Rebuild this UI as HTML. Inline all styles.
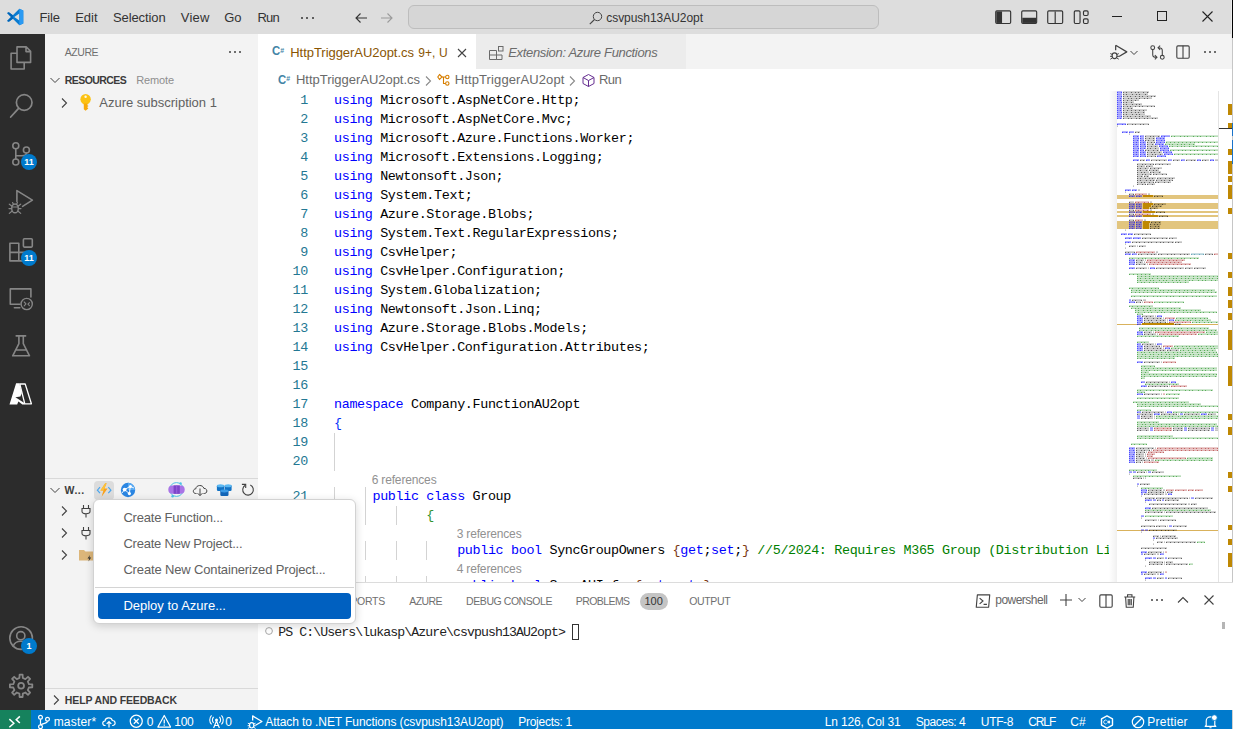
<!DOCTYPE html><html lang="en"><head><meta charset="utf-8"><title>HttpTriggerAU2opt.cs - csvpush13AU2opt - Visual Studio Code</title><style>
html,body{margin:0;padding:0}
body{width:1233px;height:729px;overflow:hidden;position:relative;background:#fff;font-family:"Liberation Sans",sans-serif;font-size:13px}
.a{position:absolute;display:block}
.t{position:absolute;white-space:pre;display:block}
.code{position:absolute;white-space:pre;font-family:"Liberation Mono",monospace;font-size:13.4px;letter-spacing:-0.341px;line-height:19px;color:#000;height:19px}
.code b{font-weight:400;color:#0000ff}
.code i{font-style:normal;color:#008000}
.ln{position:absolute;width:50px;text-align:right;font-family:"Liberation Mono",monospace;font-size:13.4px;letter-spacing:-0.341px;line-height:19px;color:#237893}
</style></head><body><div class="a" style="left:0px;top:0px;width:1233px;height:34px;background:#dddddd;"></div>
<div class="a" style="left:0px;top:34px;width:45px;height:676px;background:#2c2c2c;"></div>
<div class="a" style="left:45px;top:34px;width:213px;height:676px;background:#f3f3f3;"></div>
<div class="a" style="left:258px;top:34px;width:975px;height:35px;background:#f3f3f3;"></div>
<div class="a" style="left:258px;top:34px;width:218px;height:35px;background:#ffffff;"></div>
<div class="a" style="left:476px;top:34px;width:210px;height:35px;background:#ececec;"></div>
<div class="a" style="left:0px;top:710px;width:1233px;height:19px;background:#007acc;"></div>
<div class="a" style="left:0px;top:710px;width:31px;height:19px;background:#16825d;"></div>
<div class="a" style="left:1232px;top:34px;width:1px;height:676px;background:#c6c6c6;"></div>
<div class="a" style="left:1231px;top:0px;width:1px;height:38px;background:#ececec;"></div>
<div class="a" style="left:1232px;top:0px;width:1px;height:38px;background:#000;"></div>
<svg class="a" style="left:6px;top:8.3px;" width="18" height="18" viewBox="0 0 100 100"><path d="M74 4 L38 40 L16 23 L6 28 L28 50 L6 72 L16 77 L38 60 L74 96 L96 86 V14 Z M74 30 V70 L46 50 Z" fill="#0a7bd0" fill-rule="evenodd"/><path d="M74 4 L96 14 V86 L74 96 Z" fill="#2b9af3"/><path d="M16 23 L6 28 L28 50 L6 72 L16 77 L38 60 L38 40 Z" fill="#0065b8"/></svg>
<span class="t" style="left:39.48px;top:7.90px;font-size:13px;color:#333333;line-height:20px;letter-spacing:-0.141px;">File</span>
<span class="t" style="left:75.19px;top:7.90px;font-size:13px;color:#333333;line-height:20px;letter-spacing:-0.025px;">Edit</span>
<span class="t" style="left:112.98px;top:7.90px;font-size:13px;color:#333333;line-height:20px;letter-spacing:-0.094px;">Selection</span>
<span class="t" style="left:180.78px;top:7.90px;font-size:13px;color:#333333;line-height:20px;letter-spacing:0.226px;">View</span>
<span class="t" style="left:224.28px;top:7.90px;font-size:13px;color:#333333;line-height:20px;letter-spacing:-0.014px;">Go</span>
<span class="t" style="left:257.49px;top:7.90px;font-size:13px;color:#333333;line-height:20px;letter-spacing:-0.765px;">Run</span>
<div class="a" style="left:300.5px;top:17px;width:2px;height:2px;background:#333333;border-radius:1px"></div>
<div class="a" style="left:306px;top:17px;width:2px;height:2px;background:#333333;border-radius:1px"></div>
<div class="a" style="left:311.5px;top:17px;width:2px;height:2px;background:#333333;border-radius:1px"></div>
<svg class="a" style="left:353px;top:10px;" width="16" height="16" viewBox="0 0 16 16"><path d="M14 8H3 M7.5 3.5 L3 8 L7.5 12.5" fill="none" stroke="#333" stroke-width="1.1"/></svg>
<svg class="a" style="left:379px;top:10px;" width="16" height="16" viewBox="0 0 16 16"><path d="M2 8H13 M8.5 3.5 L13 8 L8.5 12.5" fill="none" stroke="#9a9a9a" stroke-width="1.1"/></svg>
<div class="a" style="left:408px;top:5px;width:469px;height:22px;background:#d6d6d6;border:1px solid #bdbdbd;border-radius:6px"></div>
<svg class="a" style="left:587.5px;top:9.5px;" width="16" height="16" viewBox="0 0 16 16"><circle cx="9.5" cy="6.5" r="4.2" fill="none" stroke="#444" stroke-width="1"/><path d="M6.5 9.5 L1.8 14.2" stroke="#444" stroke-width="1.1"/></svg>
<span class="t" style="left:606.24px;top:7.80px;font-size:12px;color:#333;line-height:20px;letter-spacing:-0.042px;">csvpush13AU2opt</span>
<svg class="a" style="left:993.8px;top:7.8px;" width="18.4" height="18.4" viewBox="0 0 16 16"><rect x="1.5" y="2.5" width="13" height="11" rx="1" fill="none" stroke="#333"/><rect x="2" y="3" width="5" height="10" fill="#333"/></svg>
<svg class="a" style="left:1019.8px;top:7.8px;" width="18.4" height="18.4" viewBox="0 0 16 16"><rect x="1.5" y="2.5" width="13" height="11" rx="1" fill="none" stroke="#333"/><rect x="2" y="8.5" width="12" height="4.5" fill="#333"/></svg>
<svg class="a" style="left:1045.8px;top:7.8px;" width="18.4" height="18.4" viewBox="0 0 16 16"><rect x="1.5" y="2.5" width="13" height="11" rx="1" fill="none" stroke="#333"/><path d="M8 3V13" stroke="#333"/></svg>
<svg class="a" style="left:1071.8px;top:7.8px;" width="18.4" height="18.4" viewBox="0 0 16 16"><rect x="2" y="2.5" width="5" height="11" rx="1" fill="none" stroke="#333"/><rect x="10" y="2.5" width="4" height="4" rx="1" fill="none" stroke="#333"/><rect x="10" y="9.5" width="4" height="4" rx="1" fill="none" stroke="#333"/></svg>
<div class="a" style="left:1112px;top:16px;width:10px;height:1px;background:#222;"></div>
<div class="a" style="left:1157px;top:11px;width:10px;height:10px;background:transparent;border:1px solid #222;box-sizing:border-box"></div>
<svg class="a" style="left:1202px;top:11px;" width="11" height="11" viewBox="0 0 11 11"><path d="M0.5 0.5 L10.5 10.5 M10.5 0.5 L0.5 10.5" stroke="#222" stroke-width="1.1" fill="none"/></svg>
<svg class="a" style="left:0;top:34px" width="45" height="676" viewBox="0 34 45 676">
<g fill="none" stroke="#868686" stroke-width="1.6" stroke-linejoin="round" stroke-linecap="round">
<path d="M17 46.9 H26.2 L30.6 51.3 V62.4 H17 Z M26 47.2 V51.6 H30.3"/>
<path d="M16.6 53.2 H11.1 V69 H24.2 V63"/>
<circle cx="24.2" cy="102.5" r="7.8" stroke-width="1.7"/><path d="M18.6 108.3 L10.7 117" stroke-width="1.8"/>
<circle cx="15.8" cy="145.8" r="3"/><circle cx="15.8" cy="162" r="3"/><circle cx="26.4" cy="150" r="3"/>
<path d="M15.8 148.8 V159 M26.4 153 C26.4 155.7 24 155.7 22 155.7 H15.8"/>
<path d="M16.9 201.5 V190.6 L32.4 200.1 L22.6 206.4"/>
<ellipse cx="15" cy="208.4" rx="3.3" ry="4.4" stroke-width="1.4"/>
<path d="M9.3 204.2 L11.8 206 M9 208.6 H11.6 M9.3 213.4 L11.9 211.2 M20.7 204.2 L18.2 206 M21 208.6 H18.4 M20.7 213.4 L18.1 211.2 M12.6 202.6 L13.5 204.2 M17.4 202.6 L16.5 204.2 M12 207 H18" stroke-width="1.2"/>
<path d="M9.9 243.3 H18.8 V260.9 H9.9 Z M9.9 252.4 H27.5 V260.9 H18.8"/>
<rect x="23.4" y="238.7" width="8.9" height="8.4" rx="1"/>
<path d="M20 304.3 H10.3 V288.9 H30.9 V297 M14.4 307.7 H19.8"/>
<circle cx="26.7" cy="304" r="5.6" stroke-width="1.4"/>
<path d="M24.2 302 L26 303.9 L24.2 305.8 M29.4 302.6 L27.9 304.1 L29.4 305.6" stroke-width="1.1"/>
<path d="M16.2 335.9 H25.6 M18.9 336.2 V343.7 L12.7 355.8 H29.5 L23.3 343.7 V336.2 M15.6 350 H26.6"/>
<circle cx="21.1" cy="638.1" r="11.3"/><circle cx="20.8" cy="635.7" r="4.1"/>
<path d="M13.2 646.3 C14.5 642.6 17.5 641.3 20.8 641.3 S27.3 642.6 28.7 646.3"/>
<path d="M19.4 678.0 L19.6 674.6 L22.6 674.6 L22.8 678.0 L25.4 679.1 L28.0 676.8 L30.1 678.9 L27.8 681.5 L28.9 684.1 L32.3 684.3 L32.3 687.3 L28.9 687.5 L27.8 690.1 L30.1 692.7 L28.0 694.8 L25.4 692.5 L22.8 693.6 L22.6 697.0 L19.6 697.0 L19.4 693.6 L16.8 692.5 L14.2 694.8 L12.1 692.7 L14.4 690.1 L13.3 687.5 L9.9 687.3 L9.9 684.3 L13.3 684.1 L14.4 681.5 L12.1 678.9 L14.2 676.8 L16.8 679.1 Z" stroke-width="1.8"/><circle cx="21.1" cy="685.8" r="2.9" stroke-width="1.8"/>
</g>
<path d="M16.1 383.3 H19.3 L21.8 393 L20.4 396.6 L15.4 397.3 L18.8 400.3 L17.2 404.4 H9.5 Z" fill="#fff"/>
<path d="M15.4 397.3 L23.6 402.4 L24.8 404.4 H22.3 L18.2 401.3 Z" fill="#fff"/>
<path d="M19.8 384 H25.2 L31.4 403.8 H24.8 Z" fill="none" stroke="#fff" stroke-width="1.3" stroke-linejoin="round"/>
</svg>
<div class="a" style="left:21px;top:154px;width:16px;height:16px;background:#007acc;border-radius:8px"></div>
<span class="t" style="left:21.00px;top:152.00px;font-size:9px;color:#fff;line-height:20px;font-weight:700;width:16px;text-align:center;">11</span>
<div class="a" style="left:21px;top:250px;width:16px;height:16px;background:#007acc;border-radius:8px"></div>
<span class="t" style="left:21.00px;top:248.00px;font-size:9px;color:#fff;line-height:20px;font-weight:700;width:16px;text-align:center;">11</span>
<div class="a" style="left:21px;top:638px;width:16px;height:16px;background:#007acc;border-radius:8px"></div>
<span class="t" style="left:21.00px;top:636.00px;font-size:9px;color:#fff;line-height:20px;font-weight:700;width:16px;text-align:center;">1</span>
<span class="t" style="left:64.82px;top:42.00px;font-size:10.5px;color:#6f6f6f;line-height:20px;letter-spacing:-0.460px;">AZURE</span>
<div class="a" style="left:229px;top:51px;width:2px;height:2px;background:#424242;border-radius:1px"></div>
<div class="a" style="left:234px;top:51px;width:2px;height:2px;background:#424242;border-radius:1px"></div>
<div class="a" style="left:239px;top:51px;width:2px;height:2px;background:#424242;border-radius:1px"></div>
<svg class="a" style="left:46.8px;top:72px;" width="16" height="16" viewBox="0 0 16 16"><path d="M3.5 6 L8 10.5 L12.5 6" fill="none" stroke="#424242" stroke-width="1"/></svg>
<span class="t" style="left:64.82px;top:70.00px;font-size:10.5px;color:#3b3b3b;line-height:20px;font-weight:700;letter-spacing:-0.570px;">RESOURCES</span>
<span class="t" style="left:136.20px;top:70.00px;font-size:11px;color:#8e8e8e;line-height:20px;letter-spacing:-0.124px;">Remote</span>
<svg class="a" style="left:55.7px;top:94.5px;" width="16" height="16" viewBox="0 0 16 16"><path d="M6 3.5 L10.5 8 L6 12.5" fill="none" stroke="#424242" stroke-width="1.1"/></svg>
<svg class="a" style="left:78px;top:93px;" width="16" height="19" viewBox="0 0 16 19"><circle cx="7.6" cy="6.2" r="5.2" fill="#fcc212"/><path d="M5.8 10.5 H9.4 V12.2 L10.6 13 L9.4 13.8 V14.6 L10.4 15.4 L9.4 16.2 L7.6 17.8 L5.8 16.2 Z" fill="#f7a90a"/><circle cx="7.6" cy="3.8" r="1.2" fill="#fff8e0"/></svg>
<span class="t" style="left:99.28px;top:92.50px;font-size:13px;color:#616161;line-height:20px;letter-spacing:-0.008px;">Azure subscription 1</span>
<div class="a" style="left:45px;top:478px;width:213px;height:1px;background:#d9d9d9;"></div>
<svg class="a" style="left:47px;top:482px;" width="16" height="16" viewBox="0 0 16 16"><path d="M3.5 6 L8 10.5 L12.5 6" fill="none" stroke="#424242" stroke-width="1"/></svg>
<span class="t" style="left:64.62px;top:479.50px;font-size:10.5px;color:#3b3b3b;line-height:20px;font-weight:700;letter-spacing:0.487px;">W...</span>
<div class="a" style="left:94px;top:480.5px;width:20px;height:19px;background:#dcdcdc;border-radius:4px"></div>
<svg class="a" style="left:96px;top:482px;" width="16" height="16" viewBox="0 0 16 16"><path d="M4 5.2 L1.4 8.2 L4 11.2 M12.3 5.2 L14.9 8.2 L12.3 11.2" fill="none" stroke="#4aa6ee" stroke-width="1.2"/><path d="M9.2 1.2 L4.4 8.6 H7.4 L5.6 14.8 L11.6 6.6 H8.4 L10.6 1.2 Z" fill="#f9a11b"/><path d="M9.2 1.2 L4.4 8.6 H7.4 L8.4 6.6 L10.6 1.2 Z" fill="#fcc23b"/></svg>
<svg class="a" style="left:120px;top:482px;" width="16" height="16" viewBox="0 0 16 16"><circle cx="8" cy="8" r="7.2" fill="#2b86e2"/><path d="M8 0.8 A7.2 7.2 0 0 1 15.2 8 L8 8 Z" fill="#56a8f2"/><path d="M4.6 7.6 L10.2 4.4 L9.4 11.6 Z M4.6 7.6 L2 11 M10.2 4.4 L14 6" fill="none" stroke="#fff" stroke-width="0.9"/><circle cx="4.6" cy="7.6" r="1.9" fill="#fff"/><circle cx="10.4" cy="4.4" r="1.5" fill="#fff"/><circle cx="9.4" cy="11.6" r="1.6" fill="#fff"/></svg>
<svg class="a" style="left:167.7px;top:481.2px;" width="17" height="17" viewBox="0 0 17 17"><circle cx="8.5" cy="8.5" r="6.9" fill="none" stroke="#4dc3e6" stroke-width="1"/><circle cx="12.6" cy="2.4" r="1.2" fill="#4dc3e6"/><circle cx="4.6" cy="15.2" r="1.2" fill="#4dc3e6"/><rect x="0.3" y="4.4" width="16.4" height="8.4" rx="4" fill="#a974e6"/><rect x="5.6" y="4.4" width="6.2" height="8.4" fill="#7d45c9"/><rect x="8.2" y="4.4" width="1" height="8.4" fill="#9a62dc"/></svg>
<svg class="a" style="left:192px;top:482px;" width="16" height="16" viewBox="0 0 16 16"><path d="M4.5 11.5 H3.8 C0.5 11.5 0.5 7 3.8 6.8 C4.2 2.5 11 2.5 11.8 6.3 C15.8 6.3 15.8 11.5 12.3 11.5 H11.5" fill="none" stroke="#424242" stroke-width="1"/><path d="M8 6.5 V13.5 M5.6 11.2 L8 13.6 L10.4 11.2" fill="none" stroke="#424242" stroke-width="1"/></svg>
<svg class="a" style="left:216px;top:482px;" width="16" height="16" viewBox="0 0 16 16"><rect x="0.9" y="3" width="7.2" height="6" rx="1.2" fill="#1272c4"/><rect x="8.6" y="3" width="7" height="6" rx="1.2" fill="#1272c4"/><ellipse cx="4.5" cy="3.8" rx="3.6" ry="1.5" fill="#5bb8f2"/><ellipse cx="12.1" cy="3.8" rx="3.5" ry="1.5" fill="#5bb8f2"/><rect x="4.3" y="8.4" width="8.2" height="5.6" rx="1.2" fill="#1466b8"/><ellipse cx="8.4" cy="9" rx="4.1" ry="1.4" fill="#3c9be6"/></svg>
<svg class="a" style="left:240px;top:482px;" width="16" height="16" viewBox="0 0 16 16"><path d="M5.2 3.3 A5.3 5.3 0 1 0 10.3 3" fill="none" stroke="#424242" stroke-width="1.1"/><path d="M1.9 2.4 H5.7 V5.9" fill="none" stroke="#424242" stroke-width="1.1"/></svg>
<svg class="a" style="left:55.8px;top:503px;" width="16" height="16" viewBox="0 0 16 16"><path d="M6 3.5 L10.5 8 L6 12.5" fill="none" stroke="#424242" stroke-width="1.1"/></svg>
<svg class="a" style="left:55.8px;top:525px;" width="16" height="16" viewBox="0 0 16 16"><path d="M6 3.5 L10.5 8 L6 12.5" fill="none" stroke="#424242" stroke-width="1.1"/></svg>
<svg class="a" style="left:55.8px;top:547px;" width="16" height="16" viewBox="0 0 16 16"><path d="M6 3.5 L10.5 8 L6 12.5" fill="none" stroke="#424242" stroke-width="1.1"/></svg>
<svg class="a" style="left:78px;top:503px;" width="16" height="16" viewBox="0 0 16 16"><path d="M5.5 2 V5 M10.5 2 V5 M4 5.5 H12 V8.5 C12 11.5 4 11.5 4 8.5 Z M8 11 V14.5" fill="none" stroke="#424242" stroke-width="1.1"/></svg>
<svg class="a" style="left:78px;top:525px;" width="16" height="16" viewBox="0 0 16 16"><path d="M5.5 2 V5 M10.5 2 V5 M4 5.5 H12 V8.5 C12 11.5 4 11.5 4 8.5 Z M8 11 V14.5" fill="none" stroke="#424242" stroke-width="1.1"/></svg>
<svg class="a" style="left:78px;top:547px;" width="16" height="16" viewBox="0 0 16 16"><path d="M1 3 H6 L7.5 4.5 H15 V13.5 H1 Z" fill="#dcb67a"/><path d="M12 8 L9.5 11.5 H11.2 L10.4 14.5 L13.2 10.6 H11.4 Z" fill="#333"/></svg>
<div class="a" style="left:45px;top:688px;width:213px;height:1px;background:#d9d9d9;"></div>
<svg class="a" style="left:48px;top:691.5px;" width="16" height="16" viewBox="0 0 16 16"><path d="M6 3.5 L10.5 8 L6 12.5" fill="none" stroke="#424242" stroke-width="1.1"/></svg>
<span class="t" style="left:64.82px;top:689.50px;font-size:10.5px;color:#3b3b3b;line-height:20px;font-weight:700;letter-spacing:-0.131px;">HELP AND FEEDBACK</span>
<span class="t" style="left:272.00px;top:41.20px;font-size:13.5px;color:#4384a6;line-height:20px;font-weight:700;transform:scaleX(0.84);transform-origin:0 50%;">C</span>
<span class="t" style="left:280.30px;top:40.60px;font-size:7px;color:#4384a6;line-height:20px;font-weight:700;">#</span>
<span class="t" style="left:290.29px;top:42.60px;font-size:13px;color:#895503;line-height:20px;letter-spacing:-0.047px;">HttpTriggerAU2opt.cs</span>
<span class="t" style="left:418.34px;top:42.60px;font-size:12px;color:#895503;line-height:20px;letter-spacing:0.051px;">9+, U</span>
<svg class="a" style="left:453.8px;top:44.5px;" width="16" height="16" viewBox="0 0 16 16"><path d="M4 4 L12 12 M12 4 L4 12" stroke="#444" stroke-width="1.1" fill="none"/></svg>
<svg class="a" style="left:488px;top:45px;" width="16" height="16" viewBox="0 0 16 16"><path d="M1.5 5.5 H8.5 V14.5 H1.5 Z M1.5 10 H14 V14.5 H8.5 M8.5 10 V14.5" fill="none" stroke="#6a6a6a" stroke-width="1"/><rect x="10.5" y="1.5" width="4.5" height="4.5" fill="none" stroke="#6a6a6a" stroke-width="1"/></svg>
<span class="t" style="left:508.29px;top:42.60px;font-size:13px;color:#6b6b6b;line-height:20px;font-style:italic;letter-spacing:-0.333px;">Extension: Azure Functions</span>
<svg class="a" style="left:1109px;top:43px;" width="20" height="17.8" viewBox="0 0 18 16"><path d="M6 2 L16 8 L9 12.2 M6 2 V6.5" fill="none" stroke="#424242" stroke-width="1.1" stroke-linejoin="round"/><ellipse cx="5" cy="11.5" rx="2.2" ry="2.6" fill="none" stroke="#424242" stroke-width="1"/><path d="M1.2 9.5 L2.9 10.3 M1 12 H2.8 M1.2 14.6 L3 13.4 M8.8 9.5 L7.1 10.3 M9 12 H7.2 M8.8 14.6 L7 13.4" stroke="#424242" stroke-width="0.9" fill="none"/></svg>
<svg class="a" style="left:1129px;top:48px;" width="10" height="10" viewBox="0 0 10 10"><path d="M1.5 3 L5 6.5 L8.5 3" fill="none" stroke="#424242" stroke-width="1"/></svg>
<svg class="a" style="left:1148.5px;top:43.5px;" width="17" height="17" viewBox="0 0 16 16"><circle cx="3.5" cy="3.5" r="1.8" fill="none" stroke="#424242"/><circle cx="12.5" cy="12.5" r="1.8" fill="none" stroke="#424242"/><path d="M3.5 5.5 V10 C3.5 12 5 12.5 7 12.5 M5.5 10.5 L7.5 12.5 L5.5 14.5 M12.5 10.5 V6 C12.5 4 11 3.5 9 3.5 M10.5 1.5 L8.5 3.5 L10.5 5.5" fill="none" stroke="#424242"/></svg>
<svg class="a" style="left:1174.3px;top:43px;" width="18" height="18" viewBox="0 0 16 16"><rect x="2.5" y="2.5" width="11" height="11" rx="1" fill="none" stroke="#424242"/><path d="M8 2.5 V13.5" stroke="#424242"/></svg>
<div class="a" style="left:1203.5px;top:51px;width:2px;height:2px;background:#424242;border-radius:1px"></div>
<div class="a" style="left:1208.5px;top:51px;width:2px;height:2px;background:#424242;border-radius:1px"></div>
<div class="a" style="left:1213.5px;top:51px;width:2px;height:2px;background:#424242;border-radius:1px"></div>
<span class="t" style="left:277.90px;top:70.00px;font-size:13.5px;color:#4384a6;line-height:20px;font-weight:700;transform:scaleX(0.84);transform-origin:0 50%;">C</span>
<span class="t" style="left:286.20px;top:69.40px;font-size:7px;color:#4384a6;line-height:20px;font-weight:700;">#</span>
<span class="t" style="left:295.99px;top:70.20px;font-size:13px;color:#6a6a6a;line-height:20px;letter-spacing:-0.026px;">HttpTriggerAU2opt.cs</span>
<svg class="a" style="left:420.2px;top:72.5px;" width="16" height="16" viewBox="0 0 16 16"><path d="M6 3.5 L10.5 8 L6 12.5" fill="none" stroke="#8a8a8a" stroke-width="1.1"/></svg>
<svg class="a" style="left:435.5px;top:73px;" width="15" height="15" viewBox="0 0 15 15"><path d="M2.5 1.5 L5 4 L2.5 6.5 L0.8 4 Z" fill="none" stroke="#d67e00" stroke-width="1.1" transform="translate(1,0)"/><path d="M6 4 H9.5 M7.5 4 V10.5 H9.5" fill="none" stroke="#d67e00" stroke-width="1.1"/><circle cx="11.3" cy="4" r="1.7" fill="none" stroke="#d67e00" stroke-width="1.1"/><circle cx="11.3" cy="10.5" r="1.7" fill="none" stroke="#d67e00" stroke-width="1.1"/></svg>
<span class="t" style="left:454.79px;top:70.20px;font-size:13px;color:#6a6a6a;line-height:20px;letter-spacing:0.108px;">HttpTriggerAU2opt</span>
<svg class="a" style="left:564.2px;top:72.5px;" width="16" height="16" viewBox="0 0 16 16"><path d="M6 3.5 L10.5 8 L6 12.5" fill="none" stroke="#8a8a8a" stroke-width="1.1"/></svg>
<svg class="a" style="left:581px;top:73px;" width="15" height="15" viewBox="0 0 15 15"><path d="M7.5 1.5 L13 4.5 V10.5 L7.5 13.5 L2 10.5 V4.5 Z M2 4.5 L7.5 7.5 L13 4.5 M7.5 7.5 V13.5" fill="none" stroke="#652d90" stroke-width="1" stroke-linejoin="round"/></svg>
<span class="t" style="left:598.88px;top:70.20px;font-size:13px;color:#6a6a6a;line-height:20px;letter-spacing:-0.515px;">Run</span>
<div class="code" style="left:334px;top:91.2px"><b>using</b> Microsoft.AspNetCore.Http;</div>
<div class="code" style="left:334px;top:110.2px"><b>using</b> Microsoft.AspNetCore.Mvc;</div>
<div class="code" style="left:334px;top:129.2px"><b>using</b> Microsoft.Azure.Functions.Worker;</div>
<div class="code" style="left:334px;top:148.2px"><b>using</b> Microsoft.Extensions.Logging;</div>
<div class="code" style="left:334px;top:167.2px"><b>using</b> Newtonsoft.Json;</div>
<div class="code" style="left:334px;top:186.2px"><b>using</b> System.Text;</div>
<div class="code" style="left:334px;top:205.2px"><b>using</b> Azure.Storage.Blobs;</div>
<div class="code" style="left:334px;top:224.2px"><b>using</b> System.Text.RegularExpressions;</div>
<div class="code" style="left:334px;top:243.2px"><b>using</b> CsvHelper;</div>
<div class="code" style="left:334px;top:262.2px"><b>using</b> CsvHelper.Configuration;</div>
<div class="code" style="left:334px;top:281.2px"><b>using</b> System.Globalization;</div>
<div class="code" style="left:334px;top:300.2px"><b>using</b> Newtonsoft.Json.Linq;</div>
<div class="code" style="left:334px;top:319.2px"><b>using</b> Azure.Storage.Blobs.Models;</div>
<div class="code" style="left:334px;top:338.2px"><b>using</b> CsvHelper.Configuration.Attributes;</div>
<div class="code" style="left:334px;top:395.2px"><b>namespace</b> Company.FunctionAU2opt</div>
<div class="code" style="left:334px;top:414.2px"><span style="color:#0431fa">{</span></div>
<div class="ln" style="left:258px;top:91.2px">1</div>
<div class="ln" style="left:258px;top:110.2px">2</div>
<div class="ln" style="left:258px;top:129.2px">3</div>
<div class="ln" style="left:258px;top:148.2px">4</div>
<div class="ln" style="left:258px;top:167.2px">5</div>
<div class="ln" style="left:258px;top:186.2px">6</div>
<div class="ln" style="left:258px;top:205.2px">7</div>
<div class="ln" style="left:258px;top:224.2px">8</div>
<div class="ln" style="left:258px;top:243.2px">9</div>
<div class="ln" style="left:258px;top:262.2px">10</div>
<div class="ln" style="left:258px;top:281.2px">11</div>
<div class="ln" style="left:258px;top:300.2px">12</div>
<div class="ln" style="left:258px;top:319.2px">13</div>
<div class="ln" style="left:258px;top:338.2px">14</div>
<div class="ln" style="left:258px;top:357.2px">15</div>
<div class="ln" style="left:258px;top:376.2px">16</div>
<div class="ln" style="left:258px;top:395.2px">17</div>
<div class="ln" style="left:258px;top:414.2px">18</div>
<div class="ln" style="left:258px;top:433.2px">19</div>
<div class="ln" style="left:258px;top:452.2px">20</div>
<div class="ln" style="left:258px;top:487.2px">21</div>
<div class="a" style="left:334px;top:433.2px;width:1px;height:19.0px;background:#d3d3d3;"></div>
<div class="a" style="left:334px;top:452.2px;width:1px;height:19.0px;background:#d3d3d3;"></div>
<div class="a" style="left:334px;top:487.2px;width:1px;height:19.0px;background:#d3d3d3;"></div>
<div class="a" style="left:334px;top:506.2px;width:1px;height:19.000000000000057px;background:#d3d3d3;"></div>
<div class="a" style="left:334px;top:541.2px;width:1px;height:19.0px;background:#d3d3d3;"></div>
<div class="a" style="left:334px;top:576.2px;width:1px;height:5.7999999999999545px;background:#d3d3d3;"></div>
<div class="a" style="left:365px;top:487.2px;width:1px;height:19.0px;background:#d3d3d3;"></div>
<div class="a" style="left:365px;top:506.2px;width:1px;height:19.000000000000057px;background:#d3d3d3;"></div>
<div class="a" style="left:365px;top:541.2px;width:1px;height:19.0px;background:#d3d3d3;"></div>
<div class="a" style="left:365px;top:576.2px;width:1px;height:5.7999999999999545px;background:#d3d3d3;"></div>
<div class="a" style="left:396px;top:506.2px;width:1px;height:19.000000000000057px;background:#d3d3d3;"></div>
<div class="a" style="left:396px;top:541.2px;width:1px;height:19.0px;background:#d3d3d3;"></div>
<div class="a" style="left:396px;top:576.2px;width:1px;height:5.7999999999999545px;background:#d3d3d3;"></div>
<div class="a" style="left:426px;top:541.2px;width:1px;height:19.0px;background:#d3d3d3;"></div>
<div class="a" style="left:426px;top:576.2px;width:1px;height:5.7999999999999545px;background:#d3d3d3;"></div>
<span class="t" style="left:371.64px;top:469.80px;font-size:12px;color:#919191;line-height:20px;letter-spacing:-0.153px;">6 references</span>
<div class="code" style="left:334px;top:487.2px">     <b>public</b> <b>class</b> Group</div>
<div class="code" style="left:334px;top:506.2px">            <span style="color:#319331">{</span></div>
<span class="t" style="left:456.64px;top:523.80px;font-size:12px;color:#919191;line-height:20px;letter-spacing:-0.153px;">3 references</span>
<div class="code" style="left:334px;top:541.2px">                <b>public</b> <b>bool</b> SyncGroupOwners <span style="color:#7b3814">{</span><b>get</b>;<b>set</b>;<span style="color:#7b3814">}</span> <i>//5/2024: Requires M365 Group (Distribution Li</i></div>
<span class="t" style="left:456.64px;top:558.80px;font-size:12px;color:#919191;line-height:20px;letter-spacing:-0.153px;">4 references</span>
<div class="code" style="left:334px;top:576.2px">                <b>public</b> <b>bool</b> SyncAUInfo <span style="color:#7b3814">{</span><b>get</b>;<b>set</b>;<span style="color:#7b3814">}</span></div>
<div class="a" style="left:1109px;top:91px;width:8px;height:491px;background:#fff;"></div>
<div class="a" style="left:1109px;top:91px;width:8px;height:491px;background:linear-gradient(to right, rgba(0,0,0,0), rgba(0,0,0,0.06));"></div>
<div class="a" style="left:1117px;top:91px;width:101px;height:491px;background:#fff;"></div>
<svg style="position:absolute;left:1117px;top:91px" width="101" height="491" viewBox="0 0 101 491" shape-rendering="crispEdges" fill="none" stroke-width="1"><path d="M0 105h101M0 107h101M0 113h101M0 115h101M0 117h101M0 121h101M0 125h101M0 131h101M0 133h101M0 135h101M0 137h101" stroke="#e2c57e" stroke-width="2"/><path d="M26 105h10" stroke="#bf8803" stroke-width="2"/><path d="M26 113h10" stroke="#bf8803" stroke-width="2"/><path d="M26 115h8" stroke="#bf8803" stroke-width="2"/><path d="M26 117h6" stroke="#bf8803" stroke-width="2"/><path d="M26 121h12" stroke="#bf8803" stroke-width="2"/><path d="M26 125h15" stroke="#bf8803" stroke-width="2"/><path d="M26 131h7" stroke="#bf8803" stroke-width="2"/><path d="M26 133h6" stroke="#bf8803" stroke-width="2"/><path d="M26 135h6" stroke="#bf8803" stroke-width="2"/><path d="M26 137h6" stroke="#bf8803" stroke-width="2"/><path d="M0 233.5h101" stroke="#d9b25c" stroke-width="1"/><path d="M25 233h32" stroke="#bf8803" stroke-width="2"/><path d="M0 439.5h101" stroke="#d9b25c" stroke-width="1"/><path d="M0 0.5h5M0 2.5h5M0 4.5h5M0 6.5h5M0 8.5h5M0 10.5h5M0 12.5h5M0 14.5h5M0 16.5h5M0 18.5h5M0 20.5h5M0 22.5h5M0 24.5h5M0 26.5h5M0 32.5h9M5 40.5h6M12 40.5h5M16 44.5h6M23 44.5h4M44 44.5h9M16 46.5h6M23 46.5h4M39 46.5h9M16 48.5h6M23 48.5h4M39 48.5h9M16 50.5h6M23 50.5h6M39 50.5h9M16 52.5h6M23 52.5h6M38 52.5h9M16 54.5h6M23 54.5h6M42 54.5h9M16 56.5h6M23 56.5h6M43 56.5h9M16 58.5h6M23 58.5h4M43 58.5h9M16 60.5h6M23 60.5h6M46 60.5h9M16 62.5h6M23 62.5h6M47 62.5h9M16 64.5h6M23 64.5h6M40 64.5h9M16 68.5h6M29 68.5h4M51 68.5h4M64 68.5h4M80 68.5h4M93 68.5h4M8 98.5h6M15 98.5h5M12 104.5h6M19 104.5h6M12 112.5h6M19 112.5h6M12 114.5h6M19 114.5h6M12 116.5h6M19 116.5h6M12 120.5h6M19 120.5h6M12 124.5h6M19 124.5h6M12 130.5h6M19 130.5h6M12 132.5h6M19 132.5h6M12 134.5h6M19 134.5h6M12 136.5h6M19 136.5h6M4 142.5h6M11 142.5h5M8 146.5h7M16 146.5h8M8 150.5h6M8 162.5h6M15 162.5h5M12 168.5h6M12 170.5h6M12 172.5h6M12 176.5h6M33 176.5h5M12 208.5h2M12 210.5h6M20 224.5h4M40 224.5h5M20 226.5h6M20 228.5h6M52 228.5h5M20 230.5h6M20 232.5h4M20 240.5h6M20 242.5h6M20 252.5h4M40 252.5h5M20 254.5h6M20 256.5h6M48 256.5h5M20 258.5h6M20 270.5h6M24 290.5h4M54 290.5h5M24 294.5h6M20 302.5h6M20 320.5h4M50 320.5h5M37 322.5h6M63 322.5h3M84 322.5h6M20 324.5h3M20 326.5h3M33 336.5h3M67 336.5h3M94 336.5h3M33 338.5h3M67 338.5h3M94 338.5h3M12 356.5h6M12 358.5h6M12 360.5h6M12 362.5h6M12 364.5h6M12 366.5h6M12 368.5h6M12 370.5h6M12 380.5h3M16 380.5h3M31 380.5h3M20 392.5h2M24 398.5h6M24 400.5h6M24 402.5h2M51 402.5h4M74 406.5h3M28 408.5h7M36 408.5h3M45 408.5h2M28 416.5h6M24 424.5h3M52 434.5h3M24 438.5h3M28 438.5h3M36 446.5h2M24 460.5h6M24 462.5h2M43 462.5h4M28 466.5h7M36 466.5h3M48 466.5h2M24 480.5h6M24 482.5h2M43 482.5h4M28 486.5h7M36 486.5h3M48 486.5h2" stroke="#0000ff" stroke-opacity="0.3"/><path d="M0 1.5h5M0 3.5h5M0 5.5h5M0 7.5h5M0 9.5h5M0 11.5h5M0 13.5h5M0 15.5h5M0 17.5h5M0 19.5h5M0 21.5h5M0 23.5h5M0 25.5h5M0 27.5h5M0 33.5h9M5 41.5h6M12 41.5h5M16 45.5h6M23 45.5h4M44 45.5h9M16 47.5h6M23 47.5h4M39 47.5h9M16 49.5h6M23 49.5h4M39 49.5h9M16 51.5h6M23 51.5h6M39 51.5h9M16 53.5h6M23 53.5h6M38 53.5h9M16 55.5h6M23 55.5h6M42 55.5h9M16 57.5h6M23 57.5h6M43 57.5h9M16 59.5h6M23 59.5h4M43 59.5h9M16 61.5h6M23 61.5h6M46 61.5h9M16 63.5h6M23 63.5h6M47 63.5h9M16 65.5h6M23 65.5h6M40 65.5h9M16 69.5h6M29 69.5h4M51 69.5h4M64 69.5h4M80 69.5h4M93 69.5h4M8 99.5h6M15 99.5h5M12 105.5h6M19 105.5h6M12 113.5h6M19 113.5h6M12 115.5h6M19 115.5h6M12 117.5h6M19 117.5h6M12 121.5h6M19 121.5h6M12 125.5h6M19 125.5h6M12 131.5h6M19 131.5h6M12 133.5h6M19 133.5h6M12 135.5h6M19 135.5h6M12 137.5h6M19 137.5h6M4 143.5h6M11 143.5h5M8 147.5h7M16 147.5h8M8 151.5h6M8 163.5h6M15 163.5h5M12 169.5h6M12 171.5h6M12 173.5h6M12 177.5h6M33 177.5h5M12 209.5h2M12 211.5h6M20 225.5h4M40 225.5h5M20 227.5h6M20 229.5h6M52 229.5h5M20 231.5h6M20 233.5h4M20 241.5h6M20 243.5h6M20 253.5h4M40 253.5h5M20 255.5h6M20 257.5h6M48 257.5h5M20 259.5h6M20 271.5h6M24 291.5h4M54 291.5h5M24 295.5h6M20 303.5h6M20 321.5h4M50 321.5h5M37 323.5h6M63 323.5h3M84 323.5h6M20 325.5h3M20 327.5h3M33 337.5h3M67 337.5h3M94 337.5h3M33 339.5h3M67 339.5h3M94 339.5h3M12 357.5h6M12 359.5h6M12 361.5h6M12 363.5h6M12 365.5h6M12 367.5h6M12 369.5h6M12 371.5h6M12 381.5h3M16 381.5h3M31 381.5h3M20 393.5h2M24 399.5h6M24 401.5h6M24 403.5h2M51 403.5h4M74 407.5h3M28 409.5h7M36 409.5h3M45 409.5h2M28 417.5h6M24 425.5h3M52 435.5h3M24 439.5h3M28 439.5h3M36 447.5h2M24 461.5h6M24 463.5h2M43 463.5h4M28 467.5h7M36 467.5h3M48 467.5h2M24 481.5h6M24 483.5h2M43 483.5h4M28 487.5h7M36 487.5h3M48 487.5h2" stroke="#0000ff" stroke-opacity="0.4"/><path d="M6 0.5h26M6 2.5h25M6 4.5h33M6 6.5h29M6 8.5h16M6 10.5h11M6 12.5h19M6 14.5h32M6 16.5h10M6 18.5h24M6 20.5h22M6 22.5h22M6 24.5h28M6 26.5h35M10 32.5h22M0 34.5h1M18 40.5h5M12 42.5h1M28 44.5h15M28 46.5h10M28 48.5h10M30 50.5h8M30 52.5h7M30 54.5h11M30 56.5h12M28 58.5h14M30 60.5h15M30 62.5h16M30 64.5h9M23 68.5h5M34 68.5h16M56 68.5h7M69 68.5h10M85 68.5h7M98 68.5h3M20 72.5h17M38 72.5h16M20 74.5h8M29 74.5h7M20 76.5h12M33 76.5h12M20 78.5h11M32 78.5h10M20 80.5h12M33 80.5h11M20 82.5h15M36 82.5h14M20 84.5h6M27 84.5h5M20 86.5h19M40 86.5h18M20 88.5h18M39 88.5h17M20 90.5h17M38 90.5h16M20 92.5h9M30 92.5h8M16 94.5h1M21 98.5h2M8 100.5h1M12 102.5h5M31 102.5h2M37 104.5h9M12 110.5h5M33 110.5h2M37 112.5h12M35 114.5h10M33 116.5h8M12 118.5h5M33 118.5h2M39 120.5h9M12 122.5h5M35 122.5h2M42 124.5h9M12 128.5h5M27 128.5h2M34 130.5h10M33 132.5h11M33 134.5h10M33 136.5h10M8 138.5h1M17 142.5h17M25 146.5h26M52 146.5h8M15 150.5h42M58 150.5h7M8 152.5h1M12 154.5h7M20 154.5h1M22 154.5h7M8 156.5h1M8 160.5h10M39 160.5h2M21 162.5h19M41 162.5h32M88 162.5h8M19 168.5h8M28 168.5h1M19 170.5h7M27 170.5h1M19 172.5h10M30 172.5h1M19 176.5h11M31 176.5h1M39 176.5h28M68 176.5h8M77 176.5h12M15 208.5h10M26 208.5h3M19 210.5h5M25 210.5h1M25 224.5h12M38 224.5h1M27 226.5h18M46 226.5h1M27 228.5h22M50 228.5h1M27 230.5h22M50 230.5h1M58 232.5h6M27 240.5h8M36 240.5h1M27 242.5h12M40 242.5h1M25 252.5h12M38 252.5h1M27 254.5h16M44 254.5h1M27 256.5h18M46 256.5h1M27 258.5h22M50 258.5h12M27 270.5h16M44 270.5h1M29 290.5h22M52 290.5h1M31 294.5h20M52 294.5h1M27 302.5h16M44 302.5h1M25 320.5h22M48 320.5h1M20 322.5h16M44 322.5h16M61 322.5h1M67 322.5h16M91 322.5h8M24 324.5h12M37 324.5h1M24 326.5h12M37 326.5h1M20 336.5h12M56 336.5h10M71 336.5h22M98 336.5h3M20 338.5h12M56 338.5h10M71 338.5h22M98 338.5h3M19 356.5h18M38 356.5h1M19 358.5h14M34 358.5h1M19 360.5h9M29 360.5h1M19 362.5h8M28 362.5h1M19 364.5h8M28 364.5h1M19 366.5h9M29 366.5h1M19 368.5h14M34 368.5h3M19 370.5h5M25 370.5h1M20 380.5h8M29 380.5h1M35 380.5h12M12 382.5h1M16 386.5h9M26 386.5h1M28 386.5h1M23 392.5h10M20 394.5h1M31 398.5h14M46 398.5h2M31 400.5h16M48 400.5h1M50 400.5h6M27 402.5h20M48 402.5h2M24 404.5h1M28 406.5h10M39 406.5h32M72 406.5h1M78 406.5h18M40 408.5h4M48 408.5h14M28 410.5h1M32 412.5h38M71 412.5h2M74 412.5h6M35 416.5h56M28 420.5h18M47 420.5h1M49 420.5h50M24 426.5h1M28 428.5h12M41 428.5h1M43 428.5h16M24 434.5h14M39 434.5h10M50 434.5h1M56 434.5h14M32 438.5h28M24 440.5h1M36 444.5h6M43 444.5h1M45 444.5h14M39 446.5h22M36 448.5h1M40 450.5h6M47 450.5h1M49 450.5h30M36 452.5h1M24 456.5h26M31 460.5h14M46 460.5h1M27 462.5h12M40 462.5h2M40 466.5h7M51 466.5h14M28 468.5h1M32 470.5h14M47 470.5h1M49 470.5h7M32 472.5h14M47 472.5h1M49 472.5h22M28 474.5h1M31 480.5h14M46 480.5h1M27 482.5h12M40 482.5h2M40 486.5h7M51 486.5h14M28 488.5h1" stroke="#000000" stroke-opacity="0.16"/><path d="M6 1.5h26M6 3.5h25M6 5.5h33M6 7.5h29M6 9.5h16M6 11.5h11M6 13.5h19M6 15.5h32M6 17.5h10M6 19.5h24M6 21.5h22M6 23.5h22M6 25.5h28M6 27.5h35M10 33.5h22M0 35.5h1M18 41.5h5M12 43.5h1M28 45.5h15M28 47.5h10M28 49.5h10M30 51.5h8M30 53.5h7M30 55.5h11M30 57.5h12M28 59.5h14M30 61.5h15M30 63.5h16M30 65.5h9M23 69.5h5M34 69.5h16M56 69.5h7M69 69.5h10M85 69.5h7M98 69.5h3M20 73.5h17M38 73.5h16M20 75.5h8M29 75.5h7M20 77.5h12M33 77.5h12M20 79.5h11M32 79.5h10M20 81.5h12M33 81.5h11M20 83.5h15M36 83.5h14M20 85.5h6M27 85.5h5M20 87.5h19M40 87.5h18M20 89.5h18M39 89.5h17M20 91.5h17M38 91.5h16M20 93.5h9M30 93.5h8M16 95.5h1M21 99.5h2M8 101.5h1M12 103.5h5M31 103.5h2M37 105.5h9M12 111.5h5M33 111.5h2M37 113.5h12M35 115.5h10M33 117.5h8M12 119.5h5M33 119.5h2M39 121.5h9M12 123.5h5M35 123.5h2M42 125.5h9M12 129.5h5M27 129.5h2M34 131.5h10M33 133.5h11M33 135.5h10M33 137.5h10M8 139.5h1M17 143.5h17M25 147.5h26M52 147.5h8M15 151.5h42M58 151.5h7M8 153.5h1M12 155.5h7M20 155.5h1M22 155.5h7M8 157.5h1M8 161.5h10M39 161.5h2M21 163.5h19M41 163.5h32M88 163.5h8M19 169.5h8M28 169.5h1M19 171.5h7M27 171.5h1M19 173.5h10M30 173.5h1M19 177.5h11M31 177.5h1M39 177.5h28M68 177.5h8M77 177.5h12M15 209.5h10M26 209.5h3M19 211.5h5M25 211.5h1M25 225.5h12M38 225.5h1M27 227.5h18M46 227.5h1M27 229.5h22M50 229.5h1M27 231.5h22M50 231.5h1M58 233.5h6M27 241.5h8M36 241.5h1M27 243.5h12M40 243.5h1M25 253.5h12M38 253.5h1M27 255.5h16M44 255.5h1M27 257.5h18M46 257.5h1M27 259.5h22M50 259.5h12M27 271.5h16M44 271.5h1M29 291.5h22M52 291.5h1M31 295.5h20M52 295.5h1M27 303.5h16M44 303.5h1M25 321.5h22M48 321.5h1M20 323.5h16M44 323.5h16M61 323.5h1M67 323.5h16M91 323.5h8M24 325.5h12M37 325.5h1M24 327.5h12M37 327.5h1M20 337.5h12M56 337.5h10M71 337.5h22M98 337.5h3M20 339.5h12M56 339.5h10M71 339.5h22M98 339.5h3M19 357.5h18M38 357.5h1M19 359.5h14M34 359.5h1M19 361.5h9M29 361.5h1M19 363.5h8M28 363.5h1M19 365.5h8M28 365.5h1M19 367.5h9M29 367.5h1M19 369.5h14M34 369.5h3M19 371.5h5M25 371.5h1M20 381.5h8M29 381.5h1M35 381.5h12M12 383.5h1M16 387.5h9M26 387.5h1M28 387.5h1M23 393.5h10M20 395.5h1M31 399.5h14M46 399.5h2M31 401.5h16M48 401.5h1M50 401.5h6M27 403.5h20M48 403.5h2M24 405.5h1M28 407.5h10M39 407.5h32M72 407.5h1M78 407.5h18M40 409.5h4M48 409.5h14M28 411.5h1M32 413.5h38M71 413.5h2M74 413.5h6M35 417.5h56M28 421.5h18M47 421.5h1M49 421.5h50M24 427.5h1M28 429.5h12M41 429.5h1M43 429.5h16M24 435.5h14M39 435.5h10M50 435.5h1M56 435.5h14M32 439.5h28M24 441.5h1M36 445.5h6M43 445.5h1M45 445.5h14M39 447.5h22M36 449.5h1M40 451.5h6M47 451.5h1M49 451.5h30M36 453.5h1M24 457.5h26M31 461.5h14M46 461.5h1M27 463.5h12M40 463.5h2M40 467.5h7M51 467.5h14M28 469.5h1M32 471.5h14M47 471.5h1M49 471.5h7M32 473.5h14M47 473.5h1M49 473.5h22M28 475.5h1M31 481.5h14M46 481.5h1M27 483.5h12M40 483.5h2M40 487.5h7M51 487.5h14M28 489.5h1" stroke="#000000" stroke-opacity="0.24"/><path d="M54 44.5h47M49 50.5h52M48 52.5h30M52 54.5h49M53 58.5h48M57 62.5h44M12 166.5h70M12 182.5h22M20 184.5h81M20 186.5h81M20 188.5h81M20 190.5h52M12 196.5h30M14 198.5h84M14 200.5h86M14 204.5h86M37 210.5h30M12 214.5h24M14 216.5h50M18 218.5h66M18 220.5h82M20 222.5h6M59 226.5h32M58 228.5h36M75 230.5h26M22 236.5h70M22 238.5h78M89 240.5h12M81 242.5h20M20 244.5h42M20 250.5h12M57 254.5h44M54 256.5h47M63 258.5h36M20 260.5h80M20 262.5h81M20 264.5h81M20 266.5h38M24 274.5h14M24 276.5h76M24 278.5h76M24 280.5h8M24 282.5h76M24 284.5h76M24 286.5h4M28 292.5h34M20 298.5h76M20 300.5h8M49 302.5h14M20 306.5h42M16 310.5h56M20 312.5h64M20 314.5h81M20 318.5h14M56 320.5h45M39 324.5h62M39 326.5h62M20 330.5h22M20 332.5h80M20 334.5h81M20 344.5h36M20 346.5h81M14 352.5h16M70 366.5h26M38 368.5h58M12 378.5h28M16 384.5h48M24 396.5h22M28 418.5h66M28 424.5h28M80 450.5h8M72 472.5h4" stroke="#008000" stroke-opacity="0.18"/><path d="M54 45.5h47M49 51.5h52M48 53.5h30M52 55.5h49M53 59.5h48M57 63.5h44M12 167.5h70M12 183.5h22M20 185.5h81M20 187.5h81M20 189.5h81M20 191.5h52M12 197.5h30M14 199.5h84M14 201.5h86M14 205.5h86M37 211.5h30M12 215.5h24M14 217.5h50M18 219.5h66M18 221.5h82M20 223.5h6M59 227.5h32M58 229.5h36M75 231.5h26M22 237.5h70M22 239.5h78M89 241.5h12M81 243.5h20M20 245.5h42M20 251.5h12M57 255.5h44M54 257.5h47M63 259.5h36M20 261.5h80M20 263.5h81M20 265.5h81M20 267.5h38M24 275.5h14M24 277.5h76M24 279.5h76M24 281.5h8M24 283.5h76M24 285.5h76M24 287.5h4M28 293.5h34M20 299.5h76M20 301.5h8M49 303.5h14M20 307.5h42M16 311.5h56M20 313.5h64M20 315.5h81M20 319.5h14M56 321.5h45M39 325.5h62M39 327.5h62M20 331.5h22M20 333.5h80M20 335.5h81M20 345.5h36M20 347.5h81M14 353.5h16M70 367.5h26M38 369.5h58M12 379.5h28M16 385.5h48M24 397.5h22M28 419.5h66M28 425.5h28M80 451.5h8M72 473.5h4" stroke="#008000" stroke-opacity="0.28"/><path d="M18 102.5h12M18 110.5h14M18 118.5h14M18 122.5h16M18 128.5h8M19 160.5h19M97 162.5h4M30 168.5h38M29 170.5h36M32 172.5h42M27 210.5h9M48 226.5h10M52 230.5h22M38 240.5h50M42 242.5h38M46 254.5h10M46 270.5h13M54 294.5h16M46 302.5h2M37 336.5h18M37 338.5h18M40 356.5h61M36 358.5h65M31 360.5h16M30 362.5h8M30 364.5h6M31 366.5h38M27 370.5h15M49 398.5h8M58 398.5h12M71 398.5h6M78 398.5h8M48 460.5h2M48 480.5h2" stroke="#a31515" stroke-opacity="0.22"/><path d="M18 103.5h12M18 111.5h14M18 119.5h14M18 123.5h16M18 129.5h8M19 161.5h19M97 163.5h4M30 169.5h38M29 171.5h36M32 173.5h42M27 211.5h9M48 227.5h10M52 231.5h22M38 241.5h50M42 243.5h38M46 255.5h10M46 271.5h13M54 295.5h16M46 303.5h2M37 337.5h18M37 339.5h18M40 357.5h61M36 359.5h65M31 361.5h16M30 363.5h8M30 365.5h6M31 367.5h38M27 371.5h15M49 399.5h8M58 399.5h12M71 399.5h6M78 399.5h8M48 461.5h2M48 481.5h2" stroke="#a31515" stroke-opacity="0.32"/><path d="M74 162.5h13" stroke="#267f99" stroke-opacity="0.25"/><path d="M74 163.5h13" stroke="#267f99" stroke-opacity="0.35"/><path d="M0 1.5h5M0 11.5h5M0 21.5h5M5 41.5h6M16 45.5h6M39 47.5h9M23 53.5h6M38 53.5h9M16 55.5h6M23 63.5h6M16 65.5h6M19 117.5h6M19 137.5h6M8 163.5h6M12 169.5h6M52 229.5h5M20 231.5h6M20 241.5h6M20 271.5h6M20 321.5h4M50 321.5h5M12 359.5h6M12 369.5h6M43 463.5h4M43 483.5h4" stroke="#0000ff" stroke-opacity="0.5" stroke-dasharray="1 3 1 2 1 4"/><path d="M6 1.5h26M6 11.5h11M6 21.5h22M28 49.5h10M30 57.5h12M28 59.5h14M23 69.5h5M20 77.5h12M27 85.5h5M20 87.5h19M40 87.5h18M37 105.5h9M42 125.5h9M25 147.5h26M12 155.5h7M22 155.5h7M19 173.5h10M27 255.5h16M44 323.5h16M20 337.5h12M19 363.5h8M31 401.5h16M48 409.5h14M74 413.5h6M35 417.5h56M28 429.5h12M43 429.5h16M31 461.5h14M40 467.5h7M49 473.5h22M31 481.5h14M40 487.5h7" stroke="#000000" stroke-opacity="0.5" stroke-dasharray="1 2 1 4 1 3"/><path d="M0 3.5h5M0 13.5h5M0 23.5h5M0 33.5h9M12 41.5h5M23 45.5h4M16 47.5h6M39 49.5h9M23 55.5h6M16 57.5h6M23 65.5h6M29 69.5h4M64 69.5h4M12 121.5h6M12 131.5h6M16 147.5h8M15 163.5h5M12 171.5h6M12 211.5h6M20 233.5h4M20 243.5h6M20 253.5h4M40 253.5h5M20 303.5h6M12 361.5h6M12 371.5h6M24 399.5h6" stroke="#0000ff" stroke-opacity="0.5" stroke-dasharray="1 4 1 2"/><path d="M6 3.5h25M6 13.5h19M6 23.5h22M18 41.5h5M85 69.5h7M29 75.5h7M20 79.5h11M33 81.5h11M36 83.5h14M20 89.5h18M38 91.5h16M52 147.5h8M58 151.5h7M8 161.5h10M21 163.5h19M41 163.5h32M77 177.5h12M15 209.5h10M27 227.5h18M27 257.5h18M50 259.5h12M91 323.5h8M24 325.5h12M20 339.5h12M19 365.5h8M40 409.5h4M28 421.5h18M24 435.5h14M39 435.5h10" stroke="#000000" stroke-opacity="0.5" stroke-dasharray="1 2 1 5 1 3"/><path d="M0 5.5h5M0 15.5h5M0 25.5h5M23 47.5h4M16 49.5h6M39 51.5h9M23 57.5h6M43 57.5h9M16 59.5h6M47 63.5h9M40 65.5h9M16 69.5h6M51 69.5h4M12 113.5h6M19 121.5h6M19 131.5h6M12 133.5h6M8 147.5h7M12 173.5h6M33 177.5h5M20 225.5h4M40 225.5h5M20 255.5h6M48 257.5h5M24 291.5h4M54 291.5h5M37 323.5h6M12 363.5h6M24 401.5h6M28 417.5h6M24 461.5h6M28 467.5h7M24 481.5h6M28 487.5h7" stroke="#0000ff" stroke-opacity="0.5" stroke-dasharray="1 3"/><path d="M6 5.5h33M6 15.5h32M6 25.5h28M30 51.5h8M30 61.5h15M38 73.5h16M32 79.5h10M20 81.5h12M20 91.5h17M12 119.5h5M12 129.5h5M33 133.5h11M15 151.5h42M88 163.5h8M19 177.5h11M39 177.5h28M27 229.5h22M58 233.5h6M27 259.5h22M31 295.5h20M25 321.5h22M24 327.5h12M19 357.5h18M19 367.5h9M20 381.5h8M35 381.5h12M23 393.5h10M50 401.5h6M39 407.5h32M56 435.5h14M32 439.5h28M36 445.5h6M39 447.5h22M40 451.5h6M24 457.5h26" stroke="#000000" stroke-opacity="0.5" stroke-dasharray="1 3 1 2 1 4"/><path d="M0 7.5h5M0 17.5h5M0 27.5h5M23 49.5h4M16 51.5h6M42 55.5h9M23 59.5h4M43 59.5h9M16 61.5h6M46 61.5h9M93 69.5h4M8 99.5h6M12 105.5h6M19 113.5h6M12 115.5h6M12 125.5h6M19 133.5h6M12 135.5h6M4 143.5h6M20 227.5h6M20 257.5h6M84 323.5h6M12 365.5h6M28 409.5h7" stroke="#0000ff" stroke-opacity="0.5" stroke-dasharray="1 2 1 4 1 3"/><path d="M6 7.5h29M6 17.5h10M6 27.5h35M10 33.5h22M28 45.5h15M30 53.5h7M30 63.5h16M34 69.5h16M69 69.5h10M20 73.5h17M20 83.5h15M39 89.5h17M20 93.5h9M30 93.5h8M12 111.5h5M33 135.5h10M19 169.5h8M27 231.5h22M27 241.5h8M25 253.5h12M27 271.5h16M20 323.5h16M56 337.5h10M71 337.5h22M19 359.5h14M19 369.5h14M16 387.5h9M51 467.5h14M32 471.5h14M51 487.5h14" stroke="#000000" stroke-opacity="0.5" stroke-dasharray="1 4 1 2"/><path d="M0 9.5h5M0 19.5h5M44 45.5h9M23 51.5h6M16 53.5h6M23 61.5h6M16 63.5h6M80 69.5h4M15 99.5h5M19 105.5h6M19 115.5h6M12 117.5h6M19 125.5h6M19 135.5h6M12 137.5h6M11 143.5h5M8 151.5h6M12 177.5h6M20 229.5h6M20 259.5h6M24 295.5h6M12 357.5h6M12 367.5h6M51 403.5h4" stroke="#0000ff" stroke-opacity="0.5" stroke-dasharray="1 2 1 5 1 3"/><path d="M6 9.5h16M6 19.5h24M28 47.5h10M30 55.5h11M30 65.5h9M56 69.5h7M20 75.5h8M33 77.5h12M20 85.5h6M12 103.5h5M37 113.5h12M35 115.5h10M33 117.5h8M39 121.5h9M12 123.5h5M34 131.5h10M33 137.5h10M17 143.5h17M19 171.5h7M68 177.5h8M19 211.5h5M25 225.5h12M27 243.5h12M29 291.5h22M27 303.5h16M67 323.5h16M56 339.5h10M71 339.5h22M19 361.5h9M19 371.5h5M31 399.5h14M27 403.5h20M28 407.5h10M78 407.5h18M32 413.5h38M49 421.5h50M45 445.5h14M49 451.5h30M27 463.5h12M49 471.5h7M32 473.5h14M27 483.5h12" stroke="#000000" stroke-opacity="0.5" stroke-dasharray="1 3"/><path d="M54 45.5h47M12 167.5h70M20 189.5h81M12 197.5h30M14 205.5h86M18 221.5h82M22 237.5h70M81 243.5h20M24 275.5h14M24 285.5h76M20 299.5h76M20 319.5h14M39 325.5h62" stroke="#008000" stroke-opacity="0.5" stroke-dasharray="1 2 1 5 1 3"/><path d="M49 51.5h52M57 63.5h44M12 183.5h22M20 185.5h81M14 201.5h86M89 241.5h12M20 245.5h42M20 265.5h81M24 281.5h8M20 315.5h81M20 335.5h81M20 345.5h36M72 473.5h4" stroke="#008000" stroke-opacity="0.5" stroke-dasharray="1 3"/><path d="M48 53.5h30M20 191.5h52M14 217.5h50M59 227.5h32M75 231.5h26M22 239.5h78M20 251.5h12M54 257.5h47M20 261.5h80M24 277.5h76M24 287.5h4M28 293.5h34M20 301.5h8M39 327.5h62M20 331.5h22M12 379.5h28M16 385.5h48M24 397.5h22M80 451.5h8" stroke="#008000" stroke-opacity="0.5" stroke-dasharray="1 3 1 2 1 4"/><path d="M52 55.5h49M53 59.5h48M20 187.5h81M12 215.5h24M18 219.5h66M58 229.5h36M57 255.5h44M63 259.5h36M20 267.5h38M24 283.5h76M49 303.5h14M20 307.5h42M16 311.5h56M56 321.5h45M20 347.5h81M14 353.5h16M70 367.5h26M38 369.5h58M28 419.5h66" stroke="#008000" stroke-opacity="0.5" stroke-dasharray="1 2 1 4 1 3"/><path d="M18 103.5h12M18 123.5h16M46 255.5h10M37 339.5h18" stroke="#a31515" stroke-opacity="0.5" stroke-dasharray="1 3 1 2 1 4"/><path d="M18 111.5h14M30 169.5h38M38 241.5h50M54 295.5h16M37 337.5h18" stroke="#a31515" stroke-opacity="0.5" stroke-dasharray="1 2 1 5 1 3"/><path d="M18 119.5h14M18 129.5h8M46 271.5h13M40 357.5h61M31 361.5h16M58 399.5h12M78 399.5h8" stroke="#a31515" stroke-opacity="0.5" stroke-dasharray="1 2 1 4 1 3"/><path d="M19 161.5h19M97 163.5h4M29 171.5h36M32 173.5h42M48 227.5h10M42 243.5h38M36 359.5h65M30 365.5h6M71 399.5h6" stroke="#a31515" stroke-opacity="0.5" stroke-dasharray="1 3"/><path d="M74 163.5h13" stroke="#267f99" stroke-opacity="0.5" stroke-dasharray="1 2 1 4 1 3"/><path d="M14 199.5h84M37 211.5h30M20 223.5h6M20 263.5h81M24 279.5h76M20 313.5h64M20 333.5h80M28 425.5h28" stroke="#008000" stroke-opacity="0.5" stroke-dasharray="1 4 1 2"/><path d="M27 211.5h9M52 231.5h22M30 363.5h8M31 367.5h38M27 371.5h15M49 399.5h8" stroke="#a31515" stroke-opacity="0.5" stroke-dasharray="1 4 1 2"/></svg>
<div class="a" style="left:1218px;top:91px;width:1px;height:491px;background:#e4e4e4;"></div>
<div class="a" style="left:1219px;top:91px;width:13px;height:491px;background:#fff;"></div>
<div class="a" style="left:1228px;top:104px;width:4px;height:11px;background:#bf8803;"></div>
<div class="a" style="left:1228px;top:123px;width:4px;height:4.5px;background:#bf8803;"></div>
<div class="a" style="left:1228px;top:149px;width:4px;height:6px;background:#bf8803;"></div>
<div class="a" style="left:1228px;top:160.5px;width:4px;height:13.0px;background:#bf8803;"></div>
<div class="a" style="left:1228px;top:176px;width:4px;height:5.5px;background:#bf8803;"></div>
<div class="a" style="left:1228px;top:185px;width:4px;height:13.699999999999989px;background:#bf8803;"></div>
<div class="a" style="left:1228px;top:207.5px;width:4px;height:6.0px;background:#bf8803;"></div>
<div class="a" style="left:1228px;top:253px;width:4px;height:5.5px;background:#bf8803;"></div>
<div class="a" style="left:1228px;top:272px;width:4px;height:5.699999999999989px;background:#bf8803;"></div>
<div class="a" style="left:1228px;top:287px;width:4px;height:9px;background:#bf8803;"></div>
<div class="a" style="left:1228px;top:299.5px;width:4px;height:8.0px;background:#bf8803;"></div>
<div class="a" style="left:1228px;top:313px;width:4px;height:7px;background:#bf8803;"></div>
<div class="a" style="left:1228px;top:330px;width:4px;height:19.600000000000023px;background:#bf8803;"></div>
<div class="a" style="left:1228px;top:365.7px;width:4px;height:20.30000000000001px;background:#bf8803;"></div>
<div class="a" style="left:1228px;top:413.8px;width:4px;height:6.199999999999989px;background:#bf8803;"></div>
<div class="a" style="left:1228px;top:427px;width:4px;height:8px;background:#bf8803;"></div>
<div class="a" style="left:1228px;top:471.6px;width:4px;height:6.399999999999977px;background:#bf8803;"></div>
<div class="a" style="left:1228px;top:486px;width:4px;height:6px;background:#bf8803;"></div>
<div class="a" style="left:1228px;top:525px;width:4px;height:5.399999999999977px;background:#bf8803;"></div>
<div class="a" style="left:1228px;top:539px;width:4px;height:5.7000000000000455px;background:#bf8803;"></div>
<div class="a" style="left:1228px;top:553px;width:4px;height:14px;background:#bf8803;"></div>
<div class="a" style="left:1232px;top:123px;width:1px;height:13px;background:#1a73c9;"></div>
<div class="a" style="left:1232px;top:140px;width:1px;height:24px;background:#1a73c9;"></div>
<div class="a" style="left:1219px;top:127.5px;width:13px;height:1.5px;background:#333;"></div>
<div class="a" style="left:258px;top:582px;width:975px;height:128px;background:#ffffff;"></div>
<div class="a" style="left:258px;top:582px;width:975px;height:1px;background:#dcdcdc;"></div>
<span class="t" style="left:350.42px;top:590.50px;font-size:10.5px;color:#6f6f6f;line-height:20px;letter-spacing:-0.307px;">PORTS</span>
<span class="t" style="left:409.22px;top:590.50px;font-size:10.5px;color:#6f6f6f;line-height:20px;letter-spacing:-0.560px;">AZURE</span>
<span class="t" style="left:466.12px;top:590.50px;font-size:10.5px;color:#6f6f6f;line-height:20px;letter-spacing:-0.438px;">DEBUG CONSOLE</span>
<span class="t" style="left:575.82px;top:590.50px;font-size:10.5px;color:#6f6f6f;line-height:20px;letter-spacing:-0.586px;">PROBLEMS</span>
<div class="a" style="left:639.7px;top:592.5px;width:28px;height:17px;background:#c4c4c4;border-radius:8.5px"></div>
<span class="t" style="left:639.70px;top:590.80px;font-size:11px;color:#333;line-height:20px;width:28px;text-align:center;">100</span>
<span class="t" style="left:689.22px;top:590.50px;font-size:10.5px;color:#6f6f6f;line-height:20px;letter-spacing:-0.363px;">OUTPUT</span>
<svg class="a" style="left:974.3px;top:591.5px;" width="18" height="18" viewBox="0 0 16 16"><path d="M3 2.5 H14 L13 13.5 H2 Z" fill="none" stroke="#424242" stroke-linejoin="round"/><path d="M5 5.5 L8 8 L5 10.5 M8.5 11 H11.5" fill="none" stroke="#424242"/></svg>
<span class="t" style="left:995.24px;top:590.30px;font-size:12px;color:#666;line-height:20px;letter-spacing:-0.517px;">powershell</span>
<svg class="a" style="left:1057.5px;top:592px;" width="16" height="16" viewBox="0 0 16 16"><path d="M8 2 V14 M2 8 H14" stroke="#424242" stroke-width="1.1"/></svg>
<svg class="a" style="left:1077px;top:595px;" width="10" height="10" viewBox="0 0 10 10"><path d="M1.5 3 L5 6.5 L8.5 3" fill="none" stroke="#424242" stroke-width="1"/></svg>
<svg class="a" style="left:1096.6px;top:591.5px;" width="18" height="18" viewBox="0 0 16 16"><rect x="2.5" y="2.5" width="11" height="11" rx="1" fill="none" stroke="#424242"/><path d="M8 2.5 V13.5" stroke="#424242"/></svg>
<svg class="a" style="left:1121.2px;top:591.5px;" width="17.5" height="17.5" viewBox="0 0 16 16"><path d="M3 4.5 H13 M6 4.5 V2.5 H10 V4.5 M4.2 4.5 L4.8 14 H11.2 L11.8 4.5 M6.6 6.5 V12 M8 6.5 V12 M9.4 6.5 V12" fill="none" stroke="#424242" stroke-width="1"/></svg>
<div class="a" style="left:1150.5px;top:599px;width:2px;height:2px;background:#424242;border-radius:1px"></div>
<div class="a" style="left:1155.5px;top:599px;width:2px;height:2px;background:#424242;border-radius:1px"></div>
<div class="a" style="left:1160.5px;top:599px;width:2px;height:2px;background:#424242;border-radius:1px"></div>
<svg class="a" style="left:1175px;top:592px;" width="16" height="16" viewBox="0 0 16 16"><path d="M3 10.5 L8 5.5 L13 10.5" fill="none" stroke="#424242" stroke-width="1.1"/></svg>
<svg class="a" style="left:1201px;top:592px;" width="16" height="16" viewBox="0 0 16 16"><path d="M3.5 3.5 L12.5 12.5 M12.5 3.5 L3.5 12.5" stroke="#424242" stroke-width="1.1" fill="none"/></svg>
<svg class="a" style="left:263.9px;top:625.8px;" width="10" height="10" viewBox="0 0 10 10"><circle cx="5" cy="5" r="3.4" fill="none" stroke="#a8a8a8" stroke-width="1"/></svg>
<div class="a" style="left:278.3px;top:623.4px;font-family:'Liberation Mono',monospace;font-size:13.2px;letter-spacing:-0.921px;line-height:19px;color:#222;white-space:pre">PS C:\Users\lukasp\Azure\csvpush13AU2opt&gt;</div>
<div class="a" style="left:572px;top:624px;width:7px;height:16px;background:transparent;border:1px solid #333;box-sizing:border-box"></div>
<div class="a" style="left:1221.5px;top:622px;width:3.5px;height:7px;background:#b5b5b5;"></div>
<svg class="a" style="left:6.800000000000001px;top:714.0px;" width="15" height="15" viewBox="0 0 14 14"><path d="M2.2 4.8 L6.4 8.6 L2.2 12.4" fill="none" stroke="#fff" stroke-width="1.4"/><path d="M12 2.2 L8.6 5.3 L12 8.4" fill="none" stroke="#fff" stroke-width="1.4"/></svg>
<svg class="a" style="left:36.3px;top:713.5px;" width="16" height="16" viewBox="0 0 16 16"><circle cx="4.5" cy="3.3" r="1.9" fill="none" stroke="#fff" stroke-width="1.2"/><circle cx="4.5" cy="12.7" r="1.9" fill="none" stroke="#fff" stroke-width="1.2"/><circle cx="11.5" cy="5.3" r="1.9" fill="none" stroke="#fff" stroke-width="1.2"/><path d="M4.5 5.2 V10.8 M11.5 7.2 C11.5 9.6 6.8 9 4.9 11" fill="none" stroke="#fff" stroke-width="1.2"/></svg>
<span class="t" style="left:53.64px;top:712.00px;font-size:12px;color:#ffffff;line-height:20px;letter-spacing:0.196px;">master*</span>
<svg class="a" style="left:101.3px;top:713.5px;" width="16" height="16" viewBox="0 0 16 16"><path d="M4.6 11.5 H4 C1 11.5 1 7.2 4 7 C4.4 3 10.6 3 11.3 6.5 C15 6.5 15 11.5 11.6 11.5 H11.2" fill="none" stroke="#fff" stroke-width="1.2"/><path d="M8 13.5 V7.8 M5.7 9.9 L8 7.6 L10.3 9.9" fill="none" stroke="#fff" stroke-width="1.2"/></svg>
<svg class="a" style="left:129.05px;top:714.25px;" width="14.5" height="14.5" viewBox="0 0 13 13"><circle cx="6.5" cy="6.5" r="5.4" fill="none" stroke="#fff" stroke-width="1.1"/><path d="M4.3 4.3 L8.7 8.7 M8.7 4.3 L4.3 8.7" stroke="#fff" stroke-width="1.1"/></svg>
<span class="t" style="left:146.64px;top:712.00px;font-size:12px;color:#ffffff;line-height:20px;">0</span>
<svg class="a" style="left:156.95px;top:714.05px;" width="14.5" height="14.5" viewBox="0 0 13 13"><path d="M6.5 1.3 L12.2 11.7 H0.8 Z" fill="none" stroke="#fff" stroke-width="1.1" stroke-linejoin="round"/><path d="M6.5 5 V8.6 M6.5 9.5 V10.6" stroke="#fff" stroke-width="1.1"/></svg>
<span class="t" style="left:174.34px;top:712.00px;font-size:12px;color:#ffffff;line-height:20px;letter-spacing:-0.356px;">100</span>
<svg class="a" style="left:208.8px;top:713.8px;" width="15" height="15" viewBox="0 0 14 13"><circle cx="7" cy="5" r="1.4" fill="#fff"/><path d="M7 6 L4.3 12.5 M7 6 L9.7 12.5 M5.3 10.2 H8.7" stroke="#fff" stroke-width="1.1" fill="none"/><path d="M4.3 2.3 A3.8 3.8 0 0 0 4.3 7.7 M9.7 2.3 A3.8 3.8 0 0 1 9.7 7.7 M2.4 0.8 A6 6 0 0 0 2.4 9.2 M11.6 0.8 A6 6 0 0 1 11.6 9.2" stroke="#fff" stroke-width="1" fill="none"/></svg>
<span class="t" style="left:225.34px;top:712.00px;font-size:12px;color:#ffffff;line-height:20px;">0</span>
<svg class="a" style="left:246.7px;top:713.5px;" width="16" height="16" viewBox="0 0 15 15"><path d="M5.3 6 V1.8 L14 7 L8 10.6" fill="none" stroke="#fff" stroke-width="1.2" stroke-linejoin="round"/><ellipse cx="4.4" cy="10.6" rx="2" ry="2.5" fill="none" stroke="#fff" stroke-width="1.1"/><path d="M0.8 8.6 L2.5 9.4 M0.6 11 H2.3 M0.8 13.6 L2.5 12.4 M8 8.6 L6.3 9.4 M8.2 11 H6.5 M8 13.6 L6.3 12.4" stroke="#fff" stroke-width="0.9" fill="none"/></svg>
<span class="t" style="left:265.34px;top:712.00px;font-size:12px;color:#ffffff;line-height:20px;letter-spacing:-0.092px;">Attach to .NET Functions (csvpush13AU2opt)</span>
<span class="t" style="left:518.24px;top:712.00px;font-size:12px;color:#ffffff;line-height:20px;letter-spacing:-0.268px;">Projects: 1</span>
<span class="t" style="left:824.74px;top:712.00px;font-size:12px;color:#ffffff;line-height:20px;letter-spacing:-0.165px;">Ln 126, Col 31</span>
<span class="t" style="left:915.74px;top:712.00px;font-size:12px;color:#ffffff;line-height:20px;letter-spacing:-0.419px;">Spaces: 4</span>
<span class="t" style="left:980.84px;top:712.00px;font-size:12px;color:#ffffff;line-height:20px;letter-spacing:-0.345px;">UTF-8</span>
<span class="t" style="left:1028.14px;top:712.00px;font-size:12px;color:#ffffff;line-height:20px;letter-spacing:-1.075px;">CRLF</span>
<span class="t" style="left:1070.34px;top:712.00px;font-size:12px;color:#ffffff;line-height:20px;letter-spacing:-0.024px;">C#</span>
<svg class="a" style="left:1100.4px;top:714.5px;" width="14" height="14" viewBox="0 0 13 13"><path d="M6.5 0.8 L11.6 3.6 V9.4 L6.5 12.2 L1.4 9.4 V3.6 Z" fill="none" stroke="#fff" stroke-width="1.3" stroke-linejoin="round"/><path d="M6.2 5 A1.8 1.8 0 1 0 6.2 8 M7.6 5.2 V7.8 M8.8 5.2 V7.8 M7 6 H9.4 M7 7 H9.4" fill="none" stroke="#fff" stroke-width="0.8"/></svg>
<svg class="a" style="left:1131.4px;top:714.5px;" width="14" height="14" viewBox="0 0 13 13"><circle cx="6.5" cy="6.5" r="5.3" fill="none" stroke="#fff" stroke-width="1.1"/><path d="M2.8 10.2 L10.2 2.8" stroke="#fff" stroke-width="1.1"/></svg>
<span class="t" style="left:1147.34px;top:712.00px;font-size:12px;color:#ffffff;line-height:20px;letter-spacing:0.219px;">Prettier</span>
<svg class="a" style="left:1203.2px;top:713.8px;" width="15" height="15" viewBox="0 0 14 14"><path d="M3 10.5 V6.5 C3 1.5 11 1.5 11 6.5 V10.5 L12 11.5 H2 Z M6 12.8 H8" fill="none" stroke="#fff" stroke-width="1.1" stroke-linejoin="round"/><circle cx="10.6" cy="3.4" r="2.7" fill="#fff" stroke="#007acc" stroke-width="0.8"/></svg>
<div class="a" style="left:1232px;top:710px;width:1px;height:19px;background:#d0d0d0;"></div>
<div class="a" style="left:93px;top:499px;width:263px;height:125px;background:#ffffff;border-radius:6px;box-shadow:0 2px 8px rgba(0,0,0,0.16);border:1px solid #d2d2d2;box-sizing:border-box"></div>
<span class="t" style="left:123.38px;top:507.50px;font-size:13px;color:#616161;line-height:20px;letter-spacing:-0.206px;">Create Function...</span>
<span class="t" style="left:123.38px;top:533.50px;font-size:13px;color:#616161;line-height:20px;letter-spacing:-0.216px;">Create New Project...</span>
<span class="t" style="left:123.38px;top:559.70px;font-size:13px;color:#616161;line-height:20px;letter-spacing:-0.148px;">Create New Containerized Project...</span>
<div class="a" style="left:95px;top:587px;width:259px;height:1px;background:#d4d4d4;"></div>
<div class="a" style="left:98px;top:593px;width:253px;height:26px;background:#0060c0;border-radius:4px"></div>
<span class="t" style="left:123.38px;top:596.00px;font-size:13px;color:#fff;line-height:20px;letter-spacing:0.000px;">Deploy to Azure...</span></body></html>
